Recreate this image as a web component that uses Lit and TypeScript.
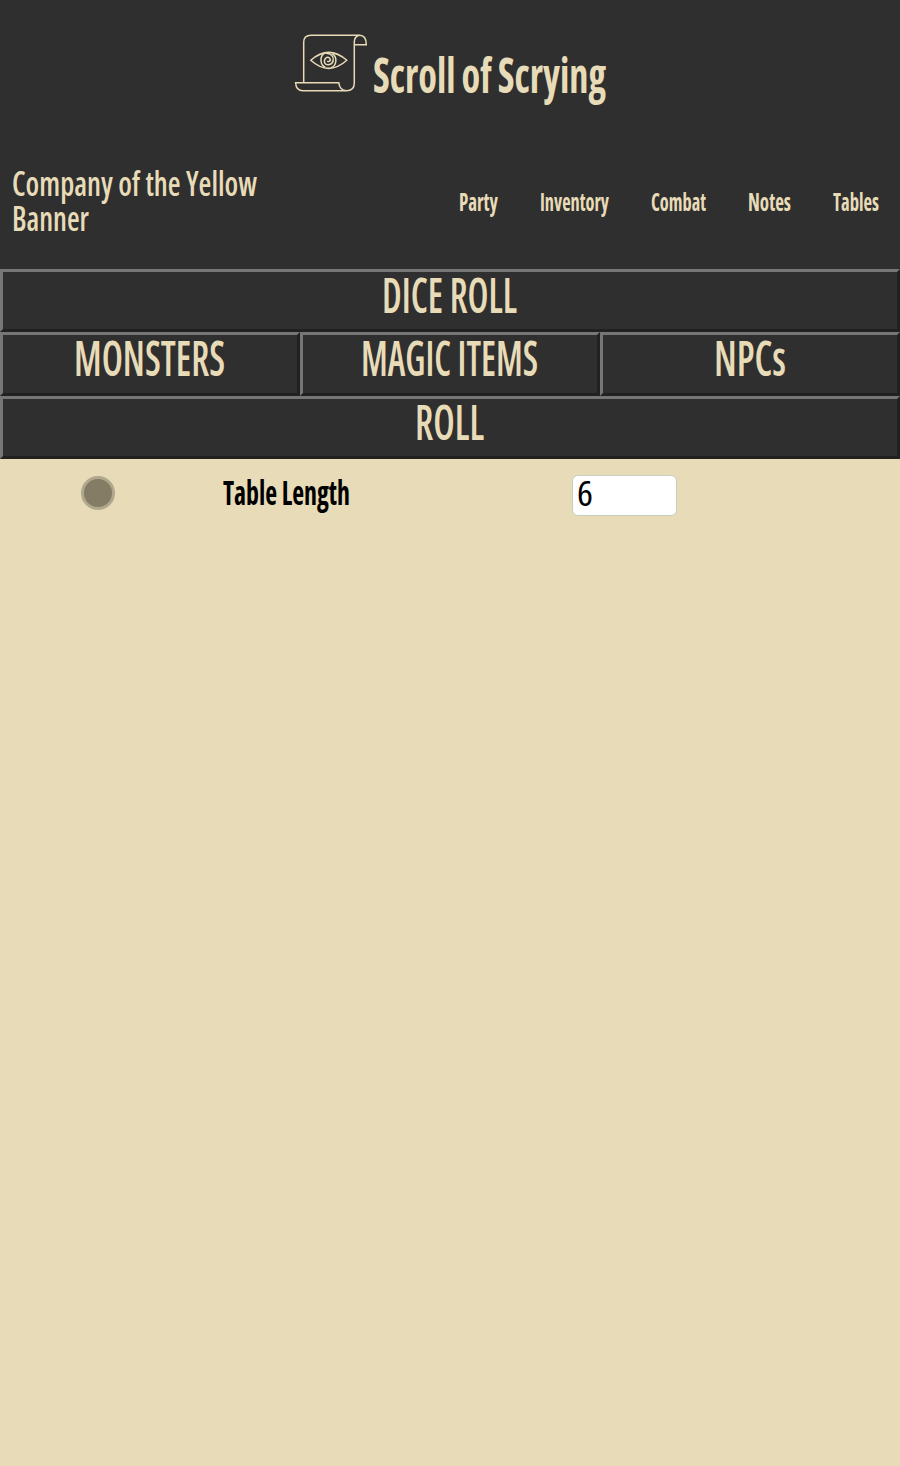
import { LitElement, html, css } from "lit";
import { customElement, property } from "lit/decorators.js";

/** Single line of text condensed horizontally to a given width. */
@customElement("fit-text")
class FitText extends LitElement {
  @property() text = "";
  @property({ type: Number }) width = 100;

  static styles = css`
    :host { display: block; line-height: 1; white-space: nowrap; flex: none; }
    .box { display: block; height: 1em; }
    .line { display: inline-block; transform-origin: 0 0; }
  `;

  updated() {
    const line = this.renderRoot.querySelector(".line") as HTMLElement;
    line.style.transform = "none";
    const natural = line.getBoundingClientRect().width;
    line.style.transform = `scaleX(${this.width / natural})`;
  }

  render() {
    return html`<span class="box" style="width:${this.width}px"><span class="line">${this.text}</span></span>`;
  }
}

@customElement("app-root")
class AppRoot extends LitElement {
  static styles = css`
    :host {
      display: block;
      min-height: 1466px;
      background: #e8dbb7;
      color: #e8dbb7;
      font-family: "Open Sans", "Noto Sans", sans-serif;
      font-stretch: 75%;
      font-weight: 560;
    }
    * { box-sizing: border-box; }
    .head { background: #2f2f2f; height: 269px; }
    .brand { display: flex; height: 155px; padding: 34px 0 0 294px; }
    .logo { width: 74px; height: 60px; flex: none; }
    .title { font-size: 48px; font-weight: 740; word-spacing: -1px; margin: 17px 0 0 5px; }
    .bar { display: flex; justify-content: space-between; padding: 11px 21px 0 12px; }
    .company { display: grid; row-gap: 1px; font-size: 34px; font-weight: 540; }
    .nav { display: flex; gap: 42px; padding-top: 23px; font-size: 25px; font-weight: 740; }
    .tabs { display: grid; grid-template-columns: repeat(3, 300px); grid-template-rows: 63px 64px 63px; }
    .tab {
      display: flex;
      justify-content: center;
      margin: 0;
      padding: 0;
      background: #2f2f2f;
      color: inherit;
      font: inherit;
      font-size: 48px;
      border: 3px solid;
      border-color: #767676 #212121 #212121 #767676;
    }
    .tab fit-text { margin: -1px 1px 0 0; }
    .wide { grid-column: 1 / -1; }
    .form { display: flex; align-items: flex-start; padding: 16px 0 0 81px; color: #000; }
    .radio { width: 34px; height: 34px; border-radius: 50%; border: 3px solid #b0a78d; background: #857c66; margin-top: 1px; flex: none; }
    .label { font-size: 33px; font-weight: 700; margin: 1px 0 0 108px; }
    .field { width: 105px; height: 41px; border: 1px solid #c9ccc0; border-radius: 6px; background: #fff; margin-left: 222px; padding: 0 0 0 4px; font-size: 35px; font-weight: 500; }
    .field fit-text { margin-top: -1px; }
  `;

  nav: [string, number][] = [["Party", 39], ["Inventory", 69], ["Combat", 55], ["Notes", 43], ["Tables", 46]];
  tabs: [string, number, boolean][] = [
    ["DICE ROLL", 135, true],
    ["MONSTERS", 151, false],
    ["MAGIC ITEMS", 177, false],
    ["NPCs", 72, false],
    ["ROLL", 69, true],
  ];

  render() {
    return html`
      <header class="head">
        <div class="brand">
          <svg class="logo" viewBox="294 34 74 60" fill="none" stroke="#e8dbb7" stroke-width="1.5">
            <path d="M303.7 82.8V42.5Q303.7 35.3 311 35.3H359.5Q366.3 35.3 366.3 44.7H354.3" />
            <path d="M359.5 35.3Q354.3 36.5 354.3 42V83Q354.3 90.8 346.5 90.8H303Q296 90.8 295.6 82.8H338.8Q339.5 90.2 346.5 90.8" />
            <path d="M310.8 60.3Q328.7 44.5 346.8 60.3Q328.7 76.5 310.8 60.3Z" />
            <path d="M324.6 53.2C319.4 56.3 320 64.8 325.2 67.2M332.3 53.6C337.6 57.2 336.8 65.6 331 67.6M325.5 53.3C331 53 334 56.3 333.2 60.5C332.3 65 326.5 66 324.7 62.8C323.3 59 327 56 329.5 58C331.5 60.2 329 62.8 327.3 61" />
          </svg>
          <fit-text class="title" text="Scroll of Scrying" width="233"></fit-text>
        </div>
        <div class="bar">
          <div class="company">
            <fit-text text="Company of the Yellow" width="245"></fit-text>
            <fit-text text="Banner" width="77"></fit-text>
          </div>
          <nav class="nav">${this.nav.map(([t, w]) => html`<fit-text text=${t} width=${w}></fit-text>`)}</nav>
        </div>
      </header>
      <div class="tabs">
        ${this.tabs.map(([t, w, wide]) => html`<button class="tab ${wide ? "wide" : ""}"><fit-text text=${t} width=${w}></fit-text></button>`)}
      </div>
      <div class="form">
        <div class="radio"></div>
        <fit-text class="label" text="Table Length" width="127"></fit-text>
        <div class="field"><fit-text text="6" width="16"></fit-text></div>
      </div>
    `;
  }
}
